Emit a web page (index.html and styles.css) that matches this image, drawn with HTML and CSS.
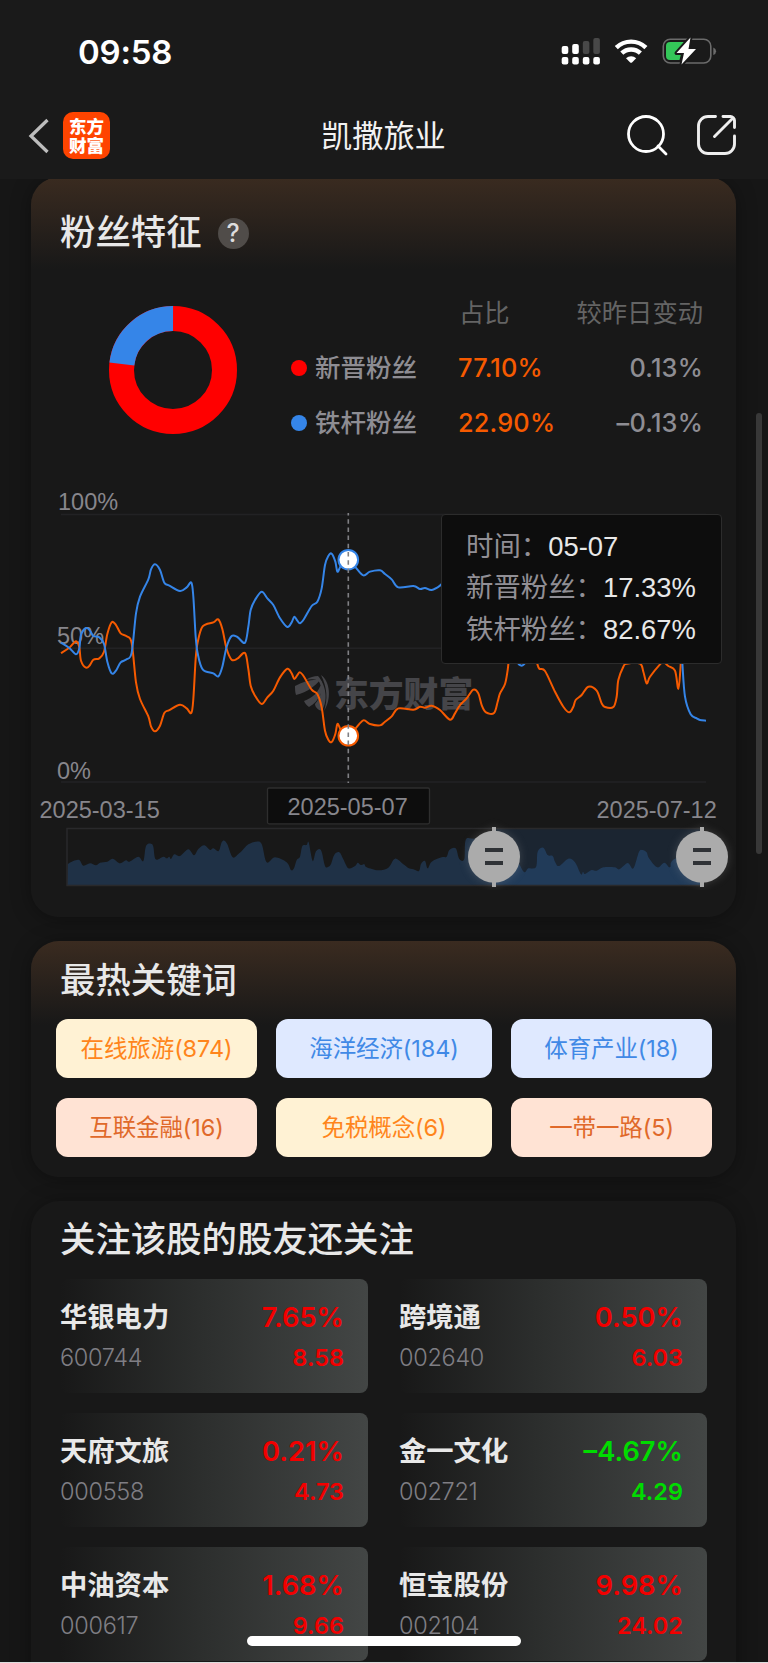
FILE: index.html
```html
<!DOCTYPE html>
<html lang="zh-CN">
<head>
    <meta charset="UTF-8">
    <meta name="viewport" content="width=device-width, initial-scale=1.0">
    <title>凯撒旅业</title>
    <link rel="stylesheet" href="styles.css">
</head>
<body>
  <header>
    <div class="status">
      <span class="time">09:58</span>
      <svg class="status-icons" width="160" height="32" viewBox="558 35 160 32">
        <g fill="#fff">
          <rect x="561.7" y="46" width="6.6" height="8" rx="2"/>
          <rect x="572.2" y="44" width="6.6" height="10" rx="2"/>
          <rect x="561.7" y="57" width="6.6" height="7.6" rx="2"/>
          <rect x="572.2" y="57" width="6.6" height="7.6" rx="2"/>
          <rect x="582.8" y="57" width="6.6" height="7.6" rx="2"/>
          <rect x="593.3" y="57" width="6.6" height="7.6" rx="2"/>
        </g>
        <g fill="#484848">
          <rect x="582.8" y="41" width="6.6" height="13" rx="2"/>
          <rect x="593.3" y="38" width="6.6" height="16" rx="2"/>
        </g>
        <g fill="none" stroke="#fff" stroke-width="4.4">
          <path d="M616.3 47.6a21.2 21.2 0 0 1 29.6 0"/>
          <path d="M621.8 53.2a13.4 13.4 0 0 1 18.6 0"/>
        </g>
        <path d="M626 58.2a7.6 7.6 0 0 1 10.2 0l-4.2 4.2q-.9.8-1.8 0z" fill="#fff"/>
        <rect x="663.3" y="39.2" width="47.5" height="23.8" rx="7" fill="none" stroke="#6b6b6b" stroke-width="1.6"/>
        <path d="M713.3 47.5q2.8 1.2 2.8 3.8t-2.8 3.8z" fill="#6b6b6b"/>
        <path d="M670 42h14l-4.500 18H670a4 4 0 0 1-4-4V46a4 4 0 0 1 4-4z" fill="#34c759"/>
        <path d="M690.500 37.500 676.500 53h7.500L681.500 64.500 696 49h-7.500z" fill="#fff" stroke="#1a1a1a" stroke-width="4" stroke-linejoin="round" paint-order="stroke"/>
      </svg>
    </div>
    <nav>
      <svg class="back" width="22" height="38" viewBox="0 0 22 38"><path d="M19.500 4 3 20l16.500 16" fill="none" stroke="#bdbdbd" stroke-width="3.300"/></svg>
      <div class="logo">东方财富</div>
      <h1>凯撒旅业</h1>
      <svg class="search" width="42" height="42" viewBox="0 0 42 42" fill="none" stroke="#fff" stroke-width="2.800" stroke-linecap="round"><circle cx="20" cy="20" r="17.500"/><path d="m32 32 8 8"/></svg>
      <svg class="share" width="40" height="40" viewBox="0 0 40 40" fill="none" stroke="#eee" stroke-width="2.900" stroke-linecap="round" stroke-linejoin="round"><path d="M18.500 1.500H11A9.500 9.500 0 0 0 1.500 11v18a9.500 9.500 0 0 0 9.500 9.500h17a9.500 9.500 0 0 0 9.500-9.500v-8M26 1.500h7.500a4 4 0 0 1 4 4V12.500M36 3 17.500 21.500"/></svg>
    </nav>
  </header>

  <main>
    <section class="card glow fans">
      <h2>粉丝特征 <span class="help">?</span></h2>
      <div class="summary">
        <svg width="130" height="130" viewBox="-65 -65 130 130" fill="none" stroke-width="25">
          <circle r="51.500" stroke="#f00"/>
          <circle r="51.500" stroke="#3585e8" pathLength="100" stroke-dasharray="23.100 76.900" transform="rotate(-173.200)"/>
        </svg>
        <div class="ratio">
          <span></span><span class="th">占比</span><span class="th right">较昨日变动</span>
          <span class="name"><i class="dot red"></i>新晋粉丝</span><span class="pct">77.10%</span><span class="diff">0.13%</span>
          <span class="name"><i class="dot blue"></i>铁杆粉丝</span><span class="pct">22.90%</span><span class="diff">–0.13%</span>
        </div>
      </div>

      <div class="chart">
        <svg width="705" height="410" viewBox="31 480 705 410">
          <path d="M61 514.500H706M61 648.300H706M61 782H706" stroke="#222224" stroke-width="1.500"/>
          <g class="axis">
            <text x="58" y="509.600">100%</text>
            <text x="57" y="644">50%</text>
            <text x="57" y="778.500">0%</text>
            <text x="39.500" y="817.700">2025-03-15</text>
            <text x="596.500" y="817.700">2025-07-12</text>
          </g>
          <g class="mark">
            <path d="M295 686c8-4 16-7 25-6-5 6-12 12-24 15-1-3-1-6-1-9zM304 701c8-3 15-8 18-20 1 9-2 20-13 26-3-2-4-4-5-6zM306 680c4-3 8-4 12-4 7 8 11 22 4 35-4-1-7-4-7-7 7-8 8-17 3-24-4-1-8-1-12 0zM321 675c9 6 11 24 3 36 4-12 3-24-3-36z"/>
            <text x="334" y="707">东方财富</text>
          </g>
          <path id="old" class="line orange"/>
          <path id="loyal" class="line sky"/>
          <circle cx="348.300" cy="559.700" r="9.800" fill="#fff" stroke="#3585e8" stroke-width="2"/>
          <circle cx="348.300" cy="735.800" r="9.800" fill="#fff" stroke="#f65a00" stroke-width="2"/>
          <path d="M348.300 513V783" stroke="#808084" stroke-width="1.600" stroke-dasharray="4.500 3.700" stroke-dashoffset="2"/>
          <rect x="267.500" y="788" width="162" height="35.800" rx="1.500" fill="#0d0d0d" stroke="#2e2e2e" stroke-width="1.300"/>
          <text class="picked" x="287.500" y="814.500">2025-05-07</text>

          <path id="area" fill="#1f3146"/>
          <rect x="494" y="829" width="208" height="56" fill="#3585e8" opacity=".12"/>
          <rect x="67" y="828.500" width="635" height="57" fill="none" stroke="#29292b" stroke-width="1.500"/>
          <g id="handle" class="handle">
            <path d="M492 827h4v60h-4z"/>
            <circle cx="494" cy="856.700" r="26"/>
            <path d="M485 848h18v4h-18zM485 861h18v4h-18z" fill="#2f3236"/>
          </g>
          <use href="#handle" x="208"/>
        </svg>
        <div class="tip">
          <p>时间：<b>05-07</b></p>
          <p>新晋粉丝：<b>17.33%</b></p>
          <p>铁杆粉丝：<b>82.67%</b></p>
        </div>
      </div>
    </section>

    <section class="card glow hot">
      <h2>最热关键词</h2>
      <div class="tags">
        <span class="tag yellow">在线旅游(874)</span>
        <span class="tag light">海洋经济(184)</span>
        <span class="tag light">体育产业(18)</span>
        <span class="tag pink">互联金融(16)</span>
        <span class="tag yellow">免税概念(6)</span>
        <span class="tag pink">一带一路(5)</span>
      </div>
    </section>

    <section class="card also">
      <h2>关注该股的股友还关注</h2>
      <div class="stocks">
        <div class="stock"><b>华银电力</b><em>7.65%</em><span>600744</span><strong>8.58</strong></div>
        <div class="stock"><b>跨境通</b><em>0.50%</em><span>002640</span><strong>6.03</strong></div>
        <div class="stock"><b>天府文旅</b><em>0.21%</em><span>000558</span><strong>4.73</strong></div>
        <div class="stock down"><b>金一文化</b><em>–4.67%</em><span>002721</span><strong>4.29</strong></div>
        <div class="stock"><b>中油资本</b><em>1.68%</em><span>000617</span><strong>9.66</strong></div>
        <div class="stock"><b>恒宝股份</b><em>9.98%</em><span>002104</span><strong>24.02</strong></div>
      </div>
    </section>
  </main>
  <div class="scrollbar"></div>
  <div class="home"></div>
  <script src="chart.js"></script>
</body>
</html>
```
FILE: styles.css
```css
* {
  box-sizing: border-box;
}

body {
  margin: 0;
  height: 1663px;
  overflow: hidden;
  position: relative;
  background: #161616;
  color: #e8e8e8;
  font-family: Inter, "Noto Sans CJK SC", sans-serif;
  border-bottom: 1px solid #ddd;
}

h1, h2, p {
  margin: 0;
  font-weight: 400;
}

svg {
  display: block;
  flex: none;
}

header {
  height: 179px;
  background: #1a1a1a;
  padding-top: 35px;
}

.status {
  display: flex;
  justify-content: space-between;
  height: 32px;
  padding: 0 50px 0 78px;
}

.time {
  font-size: 33px;
  font-weight: 600;
  line-height: 34px;
  letter-spacing: -.2px;
  color: #fff;
}

nav {
  display: flex;
  align-items: center;
  height: 48px;
  margin-top: 44px;
  padding: 0 31px 0 28px;
}

.logo {
  width: 47px;
  height: 47px;
  margin-left: 13px;
  padding: 4px 6px 0;
  border-radius: 10px;
  background: #ff4400;
  color: #fff;
  font: 900 17.5px/19px "Noto Sans CJK SC", sans-serif;
}

h1 {
  margin-left: 211px;
  width: 126px;
  white-space: nowrap;
  font-size: 31.2px;
  line-height: 48px;
  padding-top: 2px;
  color: #f2f2f2;
}

.search {
  margin-left: 179px;
}

.share {
  margin-left: 29px;
}

main {
  height: 1483px;
  overflow: hidden;
  padding: 0 32px 0 31px;
}

.card {
  border-radius: 28px;
  background: #181818;
  box-shadow: 0 2px 20px rgba(0, 0, 0, .35);
}

.glow {
  background: linear-gradient(#3a2b20, #181818 84px);
}

h2 {
  padding-left: 29px;
  font-size: 35.4px;
  font-weight: 500;
  line-height: 48px;
  display: flex;
  align-items: center;
}

.fans {
  height: 740px;
  margin-top: -2px;
  padding-top: 32px;
  background: linear-gradient(#3a2b20, #181818 92px);
}

.help {
  width: 31px;
  height: 31px;
  margin-left: 16px;
  border-radius: 50%;
  background: #504c49;
  color: #ddd;
  font-size: 25px;
  line-height: 31px;
  text-align: center;
}

.summary {
  display: flex;
  height: 190px;
  padding: 48px 0 0 77px;
}

.ratio {
  display: grid;
  grid-template-columns: 168px 100px 145px;
  grid-template-rows: 55px 55px 55px;
  margin: -20px 0 0 52px;
  line-height: 55px;
  font-size: 25.3px;
  color: #8e8d93;
}

.name {
  display: flex;
  align-items: center;
  padding-left: 1px;
  font-size: 25.5px;
  font-weight: 500;
}

.dot {
  width: 16px;
  height: 16px;
  margin-right: 8px;
  border-radius: 50%;
}

.red { background: #f00; }
.blue { background: #3585e8; }

.th {
  color: #646464;
  padding-left: 1px;
}

.pct {
  color: #f65a00;
  font-weight: 500;
  letter-spacing: .2px;
}

.right {
  text-align: right;
}

.diff {
  text-align: right;
  font-weight: 500;
  letter-spacing: .2px;
}

.chart {
  position: relative;
  margin-top: 33px;
}

.axis text, .picked {
  font: 23.5px "Liberation Sans", Arial, sans-serif;
  fill: #87868c;
}

.mark {
  fill: #454549;
}

.mark text {
  font: 900 34.8px "Noto Sans CJK SC", sans-serif;
}

.line {
  fill: none;
  stroke-width: 2;
  stroke-linejoin: round;
}

.orange { stroke: #f65a00; }
.sky { stroke: #3585e8; }

.handle {
  fill: #ababab;
  filter: drop-shadow(0 0 4px rgba(170, 170, 170, .25));
}

.tip {
  position: absolute;
  left: 410px;
  top: 34px;
  width: 281px;
  height: 150px;
  padding: 11px 0 0 24px;
  border: 1px solid #2c2c2c;
  border-radius: 4px;
  background: #0d0d0d;
  color: #918f95;
  font: 500 27.4px/41.3px "Liberation Sans", "Noto Sans CJK SC", sans-serif;
  white-space: nowrap;
}

.tip b {
  font-weight: 400;
  color: #e8e8e8;
}

.hot {
  height: 236px;
  margin-top: 24px;
  padding-top: 16px;
}

.tags {
  display: grid;
  grid-template-columns: 201px 216px 201px;
  grid-auto-rows: 59px;
  gap: 20px 19px;
  margin: 14px 0 0 25px;
}

.tag {
  border-radius: 12px;
  font-size: 23.5px;
  line-height: 59px;
  letter-spacing: -.1px;
  text-align: center;
}

.yellow { background: #fff2d4; color: #ff851b; }
.light { background: #dfe9ff; color: #4189e6; }
.pink { background: #ffe3d4; color: #e0692a; }

.also {
  height: 520px;
  margin-top: 24px;
  padding-top: 15px;
}

.stocks {
  display: grid;
  grid-template-columns: 308px 308px;
  grid-auto-rows: 114px;
  gap: 20px 31px;
  margin: 15px 0 0 29px;
}

.stock {
  display: grid;
  grid-template-columns: 1fr auto;
  grid-template-rows: 44px 38px;
  padding: 17px 24px 0 0;
  border-radius: 8px;
  background: linear-gradient(90deg, #181818, #2c2e2d 45%, #434645);
  font-size: 27.3px;
  line-height: 44px;
  color: #f20000;
}

.stock b {
  font-weight: 600;
  color: #e8e8e8;
}

.stock em {
  font-style: normal;
  font-weight: 600;
  text-align: right;
}

.stock span, .stock strong {
  font-size: 23.5px;
  line-height: 36px;
}

.stock span {
  color: #7f7e84;
  font-weight: 300;
  letter-spacing: -.3px;
}

.stock strong {
  font-weight: 600;
  text-align: right;
}

.down {
  color: #00dc00;
}

.scrollbar {
  position: absolute;
  left: 756px;
  top: 413px;
  width: 6px;
  height: 441px;
  border-radius: 3px;
  background: #383838;
}

.home {
  position: absolute;
  left: 247px;
  top: 1636px;
  width: 274px;
  height: 10px;
  border-radius: 5px;
  background: #fff;
}
```
FILE: chart.js
```js
// points are x, y pairs on a grid three times finer than the svg
const loyal = [
  93,488, 118,504, 138,523, 148,505, 153,465, 168,444, 180,452, 190,468, 208,472, 222,492, 232,545, 245,580, 258,572,
  272,547, 290,538, 305,518, 318,400, 330,350, 355,298, 363,268, 375,253, 390,270, 403,308, 418,317, 450,333, 470,322,
  484,308, 490,350, 497,470, 503,520, 518,568, 550,580, 565,589, 577,560, 590,500, 605,468, 622,471, 645,488, 655,440,
  662,390, 675,360, 695,335, 712,355, 730,375, 750,415, 772,441, 785,427, 793,410, 802,422, 810,430, 822,417, 845,378,
  862,365, 875,325, 885,255, 895,228, 905,221, 916,245, 922,275, 930,262, 938,242, 955,238, 977,262, 1000,286, 1020,275,
  1050,271, 1065,282, 1085,298, 1105,322, 1150,318, 1170,327, 1185,324, 1205,330, 1230,317, 1260,288, 1275,307,
  1290,332, 1310,352, 1330,378, 1345,367, 1355,332, 1368,310, 1392,308, 1403,342, 1410,367, 1425,395, 1433,437,
  1440,490, 1458,540, 1475,557, 1492,540, 1510,500, 1521,459, 1528,441, 1545,434, 1575,372, 1600,327, 1618,310,
  1630,327, 1637,347, 1655,362, 1675,387, 1700,375, 1715,337, 1725,326, 1750,326, 1760,357, 1765,407, 1780,447,
  1790,456, 1830,456, 1840,432, 1850,397, 1860,417, 1890,454, 1900,461, 1915,449, 1935,435, 1945,380, 1951,437,
  1957,548, 1965,650, 1982,703, 2000,715, 2010,720, 2028,722
]

const volume = [
  143,252, 160,243, 178,240, 190,257, 210,250, 228,256, 240,248, 262,245, 278,236, 300,250, 318,241, 328,245, 355,230,
  370,243, 378,198, 393,191, 400,200, 407,238, 430,230, 440,235, 448,230, 453,237, 463,223, 480,228, 505,208, 522,226,
  535,207, 553,196, 570,210, 580,205, 596,213, 605,187, 613,182, 622,193, 638,232, 655,222, 668,210, 685,193, 708,185,
  725,192, 740,247, 765,232, 800,247, 813,270, 822,265, 830,240, 840,230, 847,198, 860,195, 866,187, 878,243, 888,214,
  903,211, 915,258, 925,260, 933,252, 943,224, 958,217, 970,238, 985,265, 1005,258, 1013,248, 1022,255, 1033,253,
  1040,262, 1075,271, 1105,263, 1125,236, 1150,253, 1165,264, 1180,268, 1197,273, 1203,252, 1215,243, 1223,265,
  1235,245, 1265,232, 1280,230, 1288,210, 1307,205, 1318,237, 1333,237, 1337,180, 1360,176, 1440,180, 1490,240,
  1512,276, 1525,265, 1548,261, 1553,215, 1570,203, 1583,225, 1598,228, 1605,245, 1617,258, 1645,236, 1665,247,
  1683,283, 1689,275, 1695,282, 1715,270, 1730,272, 1750,262, 1785,262, 1798,268, 1823,249, 1840,265, 1857,215,
  1868,210, 1880,217, 1887,235, 1912,262, 1933,248, 1950,262, 1962,238, 2046,200
]

function toPoints(list, left, top) {
  let pts = []
  for (let i = 0; i < list.length; i += 2) {
    pts.push([left + list[i] / 3, top + list[i + 1] / 3])
  }
  return pts
}

// smooth curve through all the points
function curve(p) {
  let d = `M${p[0]}`
  for (let i = 0; i < p.length - 1; i++) {
    let a = p[i - 1] || p[i], b = p[i], c = p[i + 1], e = p[i + 2] || c
    d += `C${b[0] + (c[0] - a[0]) / 6},${b[1] + (c[1] - a[1]) / 6} ${c[0] - (e[0] - b[0]) / 6},${c[1] - (e[1] - b[1]) / 6} ${c}`
  }
  return d
}

let blue = toPoints(loyal, 30, 480)
// both groups add up to 100%, so the second line is the first one turned over
let orange = blue.map(p => [p[0], 1295.7 - p[1]])

document.getElementById('loyal').setAttribute('d', curve(blue))
document.getElementById('old').setAttribute('d', curve(orange))
document.getElementById('area').setAttribute('d', curve(toPoints(volume, 20, 780)) + 'V885H67Z')
```
